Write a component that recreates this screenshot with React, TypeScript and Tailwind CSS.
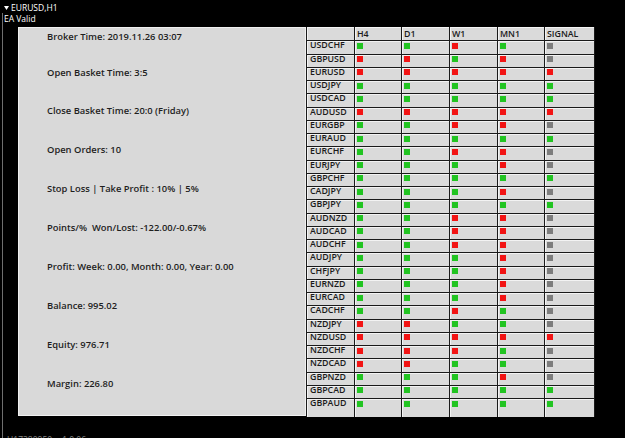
import React from "react";

type Sig = "G" | "R" | "N";

const SQUARE_CLASS_MAP: Record<Sig, string> = {
  G: "bg-[#22c422]",
  R: "bg-[#f21414]",
  N: "bg-[#7d7d7d]",
};

const COLUMNS = ["H4", "D1", "W1", "MN1", "SIGNAL"];

const PAIRS: [string, string][] = [
  ["USDCHF", "GGRGN"],
  ["GBPUSD", "RRGRN"],
  ["EURUSD", "RRRRR"],
  ["USDJPY", "GGGGG"],
  ["USDCAD", "GGGGG"],
  ["AUDUSD", "RRRRR"],
  ["EURGBP", "GGRRN"],
  ["EURAUD", "GGGGG"],
  ["EURCHF", "GGRRN"],
  ["EURJPY", "GGGRN"],
  ["GBPCHF", "GGGGG"],
  ["CADJPY", "GGGRN"],
  ["GBPJPY", "GGGGG"],
  ["AUDNZD", "GGRRN"],
  ["AUDCAD", "GGRRN"],
  ["AUDCHF", "GGRRN"],
  ["AUDJPY", "GGGRN"],
  ["CHFJPY", "GGGRN"],
  ["EURNZD", "GGGRN"],
  ["EURCAD", "GGGRN"],
  ["CADCHF", "GGRGN"],
  ["NZDJPY", "RRGGN"],
  ["NZDUSD", "RRRRR"],
  ["NZDCHF", "RRRGN"],
  ["NZDCAD", "RRGGN"],
  ["GBPNZD", "GGGRN"],
  ["GBPCAD", "GGGGG"],
  ["GBPAUD", "GGGGG"],
];

const INFO_LINES = [
  "Open Basket Time: 3:5",
  "Close Basket Time: 20:0 (Friday)",
  "Open Orders: 10",
  "Stop Loss | Take Profit : 10% | 5%",
  "Points/%  Won/Lost: -122.00/-0.67%",
  "Profit: Week: 0.00, Month: 0.00, Year: 0.00",
  "Balance: 995.02",
  "Equity: 976.71",
  "Margin: 226.80",
];

// light top-left bevel like the MT4 edit boxes
const cell = "bg-[#dadada] shadow-[inset_1px_1px_0_#f3f3f3]";

const App = () => {
  return (
    <div className="w-[625px] h-[438px] bg-black overflow-hidden font-['Open_Sans',sans-serif]">
      <div className="h-[13px] pt-[3px] pl-[4px] flex items-start gap-[2px] text-white text-[8.5px] leading-[10px]">
        <svg width="5" height="4" viewBox="0 0 5 4" className="mt-[3px]">
          <polygon points="0,0 5,0 2.5,4" fill="#ffffff" />
        </svg>
        <span>EURUSD,H1</span>
      </div>
      <div className="ml-[2px] h-[425px] border-l border-[#6f6f6f] flex flex-col">
        <div className="h-[11px] pl-[1px] text-white text-[8.5px] leading-[11px]">EA Valid</div>

        <div className="flex ml-[15px] mt-[3px] h-[389.5px]">
          {/* info panel */}
          <div className="w-[288px] h-[389px] bg-[#d9d9d9] border border-[#f0f0f0] pl-[28px] text-[#1e1e1e] text-[9.4px] font-semibold whitespace-pre">
            <div className="h-[25.5px] pt-[3px] leading-[12px]">Broker Time: 2019.11.26 03:07</div>
            {INFO_LINES.map((line) => (
              <div key={line} className="h-[38.9px] leading-[38.9px]">
                {line}
              </div>
            ))}
          </div>

          {/* signal table */}
          <div className="w-[289px] bg-[#1a1a1a] px-px grid gap-x-px gap-y-px grid-cols-[47px_46px_47px_47px_46px_49px] grid-rows-[13.25px_repeat(27,12.25px)_17.5px] text-[#1a1a1a] text-[8.8px] font-semibold leading-[9px]">
            <div className={cell} />
            {COLUMNS.map((c) => (
              <div key={c} className={`${cell} pt-[2.7px] pl-[2px]`}>
                {c}
              </div>
            ))}
            {PAIRS.map(([pair, sigs]) => (
              <React.Fragment key={pair}>
                <div className={`${cell} pl-[3px]`}>{pair}</div>
                {sigs.split("").map((s, i) => (
                  <div key={i} className={cell}>
                    <div className={`w-[6px] h-[6px] mt-[1.5px] ml-[2px] ${SQUARE_CLASS_MAP[s as Sig]}`} />
                  </div>
                ))}
              </React.Fragment>
            ))}
          </div>
        </div>

        <div className="mt-[18px] pl-[4px] flex gap-[10px] text-[#8a8a8a] text-[8.5px] leading-[10px]">
          <span>H17380950</span>
          <span>1.0.06</span>
        </div>
      </div>
    </div>
  );
};

export default App;
